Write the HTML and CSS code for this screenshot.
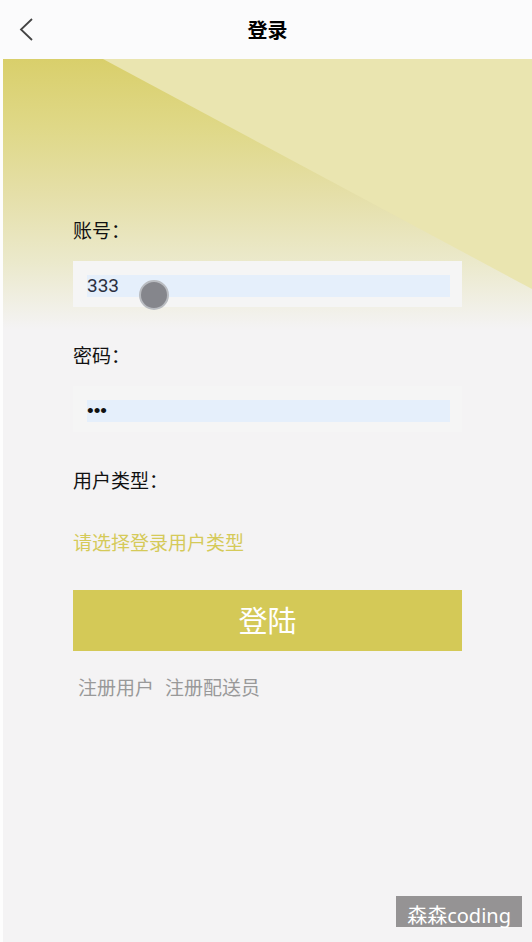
FILE: index.html
```html
<!DOCTYPE html>
<html lang="zh-CN">
<head>
  <meta charset="utf-8">
  <meta name="viewport" content="width=device-width, initial-scale=1">
  <title>登录</title>
  <link rel="stylesheet" href="styles.css">
</head>
<body>
  <header class="navbar">
    <button class="back" type="button" aria-label="返回">
      <svg width="14" height="24" viewBox="0 0 14 24" aria-hidden="true">
        <path d="M13 1 2 11.500 13 22" fill="none" stroke="#444" stroke-width="1.800"/>
      </svg>
    </button>
    <h1 class="title">登录</h1>
  </header>
  <main class="page">
    <svg class="backdrop" viewBox="0 0 529 270" preserveAspectRatio="none" aria-hidden="true">
      <defs>
        <linearGradient id="fade" x1="0" y1="0" x2="0" y2="1">
          <stop offset="0" stop-color="#d9cf6b"/>
          <stop offset="0.250" stop-color="#dfd887"/>
          <stop offset="0.500" stop-color="#e5dfa8"/>
          <stop offset="0.750" stop-color="#ebe9cb"/>
          <stop offset="1" stop-color="#f4f3f4"/>
        </linearGradient>
      </defs>
      <rect width="529" height="270" fill="url(#fade)"/>
      <path d="M100 0H529V230Z" fill="#eae5b0"/>
    </svg>
    <form class="login">
      <div class="field">
        <label for="account">账号：</label>
        <div class="box"><input id="account" type="text" value="333"></div>
      </div>
      <div class="field">
        <label for="password">密码：</label>
        <div class="box"><input id="password" type="password" value="333"></div>
      </div>
      <div class="field field-type">
        <label for="type">用户类型：</label>
        <select id="type">
          <option>请选择登录用户类型</option>
        </select>
      </div>
      <button class="submit" type="button">登陆</button>
      <nav class="links">
        <a href="#user">注册用户</a>
        <a href="#courier">注册配送员</a>
      </nav>
    </form>
    <span class="pointer"></span>
    <div class="watermark">森森coding</div>
  </main>
</body>
</html>
```
FILE: styles.css
```css
* {
  box-sizing: border-box;
}

body {
  margin: 0;
  min-height: 100vh;
  display: flex;
  flex-direction: column;
  background: #fdfdfd;
  color: #111;
  font-family: "Noto Sans CJK SC", sans-serif;
  font-size: 19px;
  line-height: 28px;
}

button,
input,
select {
  margin: 0;
  padding: 0;
  border: 0;
  border-radius: 0;
  font: inherit;
  color: inherit;
}

.navbar {
  display: grid;
  grid-template-columns: 48px 1fr 48px;
  align-items: center;
  height: 59px;
  padding-left: 3px;
  background: #fbfbfc;
}

.back {
  display: flex;
  padding-left: 16px;
  background: none;
}

.title {
  margin: 0;
  text-align: center;
  font-size: 20px;
  font-weight: 700;
  color: #000;
}

.page {
  position: relative;
  flex: 1;
  display: flex;
  flex-direction: column;
  margin-left: 3px;
  padding: 157px 70px 15px;
  background: #f4f3f4;
}

.backdrop {
  position: absolute;
  top: 0;
  left: 0;
  width: 100%;
  height: 270px;
}

.login {
  position: relative;
  display: flex;
  flex-direction: column;
}

.field {
  display: flex;
  flex-direction: column;
  gap: 17px;
  margin-bottom: 34px;
}

.field-type {
  gap: 34px;
}

.box {
  height: 46px;
  padding: 14px 12px 10px 14px;
  background: #f5f5f5;
}

.box input {
  display: block;
  width: 100%;
  height: 22px;
  background: #e5effb;
  font-family: Roboto, "Liberation Sans", sans-serif;
  line-height: 22px;
}

#account {
  color: #2b3040;
}

#password {
  font-family: "Liberation Sans", sans-serif;
}

.field-type select {
  appearance: none;
  height: 28px;
  background: none;
  color: #d5ca59;
}

.submit {
  height: 61px;
  padding-bottom: 4px;
  background: #d4c957;
  color: #fff;
  font-size: 29px;
}

.links {
  display: flex;
  gap: 11px;
  margin-top: 22px;
  padding-left: 5px;
}

.links a {
  color: #999;
  text-decoration: none;
}

.pointer {
  position: absolute;
  top: 221px;
  left: 136px;
  width: 30px;
  height: 30px;
  border: 2px solid #b9bcc1;
  border-radius: 50%;
  background: #85868c;
}

.watermark {
  align-self: flex-end;
  margin: auto -60px 0 0;
  padding: 6px 11px 0;
  height: 31px;
  background: #959394;
  color: #fff;
  font-family: "Noto Sans", "Noto Sans CJK SC", sans-serif;
  font-size: 20px;
}
```
